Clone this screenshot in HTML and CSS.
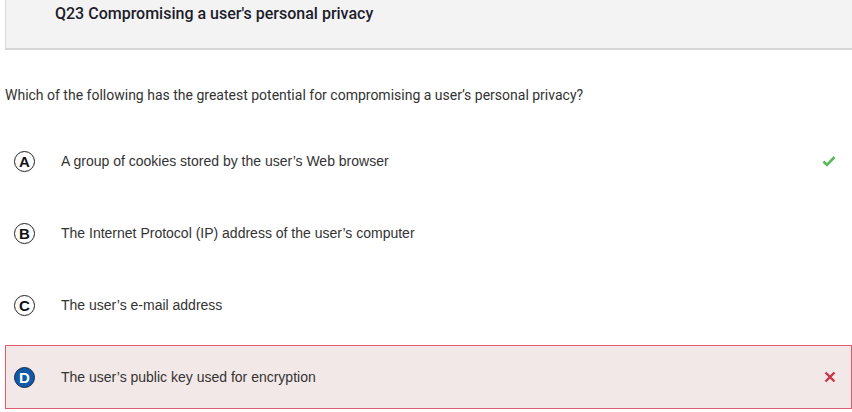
FILE: index.html
```html
<!DOCTYPE html>
<html>
<head>
<meta charset="utf-8">
<link rel="stylesheet" href="styles.css">
</head>
<body>
<div class="page">
  <div class="header"><h1 class="title">Q23 Compromising a user's personal privacy</h1></div>
  <p class="question">Which of the following has the greatest potential for compromising a user’s personal privacy?</p>
  <div class="options">
    <div class="option">
      <span class="letter">A</span>
      <span class="text">A group of cookies stored by the user’s Web browser</span>
      <svg class="mark" width="14" height="12" viewBox="0 0 14 12"><path d="M1.5 6.5 L5 10 L12.5 2" fill="none" stroke="#5cb85c" stroke-width="2.6"/></svg>
    </div>
    <div class="option">
      <span class="letter">B</span>
      <span class="text">The Internet Protocol (IP) address of the user’s computer</span>
    </div>
    <div class="option">
      <span class="letter">C</span>
      <span class="text">The user’s e-mail address</span>
    </div>
    <div class="option wrong">
      <span class="letter selected">D</span>
      <span class="text">The user’s public key used for encryption</span>
      <svg class="mark" width="12" height="12" viewBox="0 0 12 12"><path d="M1.5 1.5 L10.5 10.5 M10.5 1.5 L1.5 10.5" fill="none" stroke="#c9364a" stroke-width="2.4"/></svg>
    </div>
  </div>
</div>
</body>
</html>
```

FILE: styles.css
```css
html, body {
  margin: 0;
  padding: 0;
  background: #ffffff;
}
.page {
  width: 852px;
  height: 412px;
  overflow: hidden;
}
.header {
  margin-left: 5px;
  height: 48px;
  background: #f3f3f3;
  border-left: 1px solid #dcdcdc;
  border-bottom: 2px solid #d6d6d6;
  box-sizing: content-box;
}
.title {
  margin: 0;
  padding: 3px 0 0 49px;
  font-family: Roboto, "Liberation Sans", sans-serif;
  font-weight: 500;
  font-size: 16px;
  line-height: 21px;
  color: #1d1d2b;
}
.question {
  margin: 35px 0 0 5px;
  font-family: Roboto, "Liberation Sans", sans-serif;
  font-size: 14px;
  line-height: 20px;
  color: #333333;
}
.options {
  display: flex;
  flex-direction: column;
  gap: 8px;
  margin-top: 24px;
}
.option {
  margin-left: 5px;
  height: 64px;
  box-sizing: border-box;
  border: 1px solid transparent;
  display: flex;
  align-items: center;
  padding-left: 8px;
  padding-right: 15px;
  font-family: "Liberation Sans", Arial, sans-serif;
  font-size: 14px;
  color: #333333;
}
.option.wrong {
  background: #f3e8e8;
  border-color: #e25b6a;
}
.letter {
  width: 19px;
  height: 19px;
  border: 1.5px solid #222;
  border-radius: 50%;
  display: flex;
  align-items: center;
  justify-content: center;
  font-family: "Liberation Sans", Arial, sans-serif;
  font-weight: bold;
  font-size: 15px;
  color: #111;
  flex: none;
}
.letter.selected {
  background: #0e5aa7;
  border-color: #1b2b44;
  color: #ffffff;
}
.text {
  margin-left: 26px;
  flex: 1;
}
.mark {
  flex: none;
}
```
